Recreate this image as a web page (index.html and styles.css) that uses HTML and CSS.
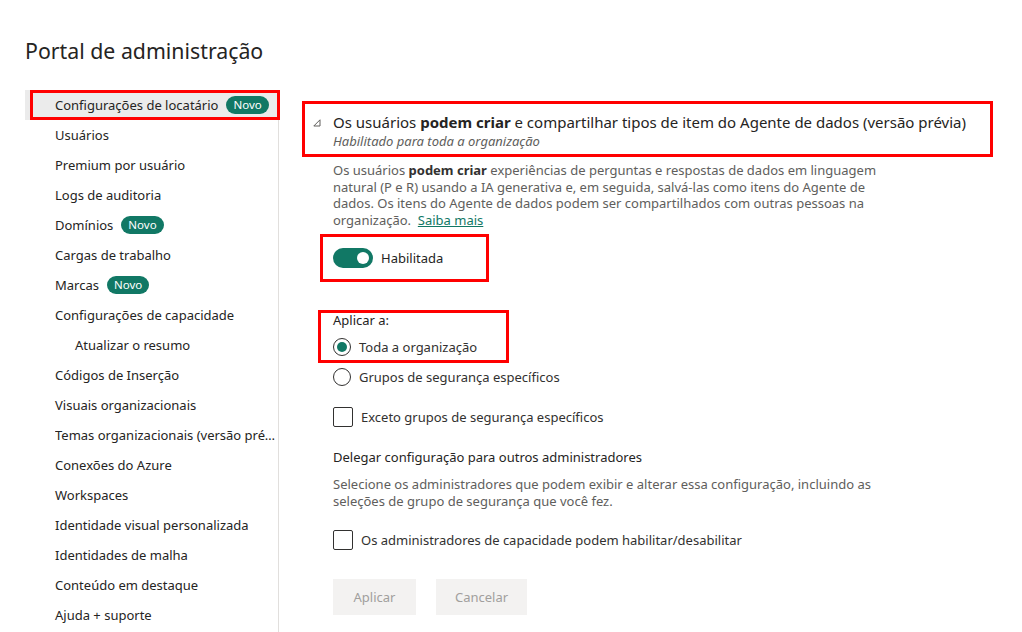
FILE: index.html
```html
<!DOCTYPE html>
<html lang="pt-BR">
<head>
<meta charset="utf-8">
<title>Portal de administração</title>
<link rel="stylesheet" href="styles.css">
</head>
<body>
<h1 class="page-title">Portal de administração</h1>
<div class="layout">
  <nav class="sidebar">
    <div class="nav-item selected">Configurações de locatário <span class="badge">Novo</span></div>
    <div class="nav-item">Usuários</div>
    <div class="nav-item">Premium por usuário</div>
    <div class="nav-item">Logs de auditoria</div>
    <div class="nav-item">Domínios <span class="badge">Novo</span></div>
    <div class="nav-item">Cargas de trabalho</div>
    <div class="nav-item">Marcas <span class="badge">Novo</span></div>
    <div class="nav-item">Configurações de capacidade</div>
    <div class="nav-item sub">Atualizar o resumo</div>
    <div class="nav-item">Códigos de Inserção</div>
    <div class="nav-item">Visuais organizacionais</div>
    <div class="nav-item"><span class="ellip">Temas organizacionais (versão prévia)</span></div>
    <div class="nav-item">Conexões do Azure</div>
    <div class="nav-item">Workspaces</div>
    <div class="nav-item">Identidade visual personalizada</div>
    <div class="nav-item">Identidades de malha</div>
    <div class="nav-item">Conteúdo em destaque</div>
    <div class="nav-item">Ajuda + suporte</div>
  </nav>
  <main class="main">
    <div class="setting-header">
      <svg class="caret" width="8" height="8" viewBox="0 0 8 8"><path d="M7 0.8 L7 7 L0.8 7 Z" fill="none" stroke="#605e5c" stroke-width="1"/></svg>
      <div class="header-text">
        <div class="setting-title">Os usuários <b>podem criar</b> e compartilhar tipos de item do Agente de dados (versão prévia)</div>
        <div class="setting-sub">Habilitado para toda a organização</div>
      </div>
    </div>
    <div class="setting-body">
      <p class="desc">Os usuários <b>podem criar</b> experiências de perguntas e respostas de dados em linguagem<br>natural (P e R) usando a IA generativa e, em seguida, salvá-las como itens do Agente de<br>dados. Os itens do Agente de dados podem ser compartilhados com outras pessoas na<br>organização.&nbsp; <a class="link" href="#">Saiba mais</a></p>

      <div class="toggle-box">
        <span class="toggle"><span class="thumb"></span></span>
        <span class="toggle-label">Habilitada</span>
      </div>

      <div class="apply-box">
        <div class="apply-label">Aplicar a:</div>
        <div class="option first"><span class="radio checked"></span><span>Toda a organização</span></div>
      </div>
      <div class="option second"><span class="radio"></span><span>Grupos de segurança específicos</span></div>

      <div class="option check-row"><span class="checkbox"></span><span>Exceto grupos de segurança específicos</span></div>

      <div class="delegate-title">Delegar configuração para outros administradores</div>
      <p class="desc delegate-desc">Selecione os administradores que podem exibir e alterar essa configuração, incluindo as<br>seleções de grupo de segurança que você fez.</p>

      <div class="option check-row2"><span class="checkbox"></span><span>Os administradores de capacidade podem habilitar/desabilitar</span></div>

      <div class="buttons">
        <button class="btn btn-apply">Aplicar</button>
        <button class="btn btn-cancel">Cancelar</button>
      </div>
    </div>
  </main>
</div>
</body>
</html>
```
FILE: styles.css
```css
* { box-sizing: border-box; }
html, body { margin: 0; padding: 0; background: #ffffff; }
body {
  font-family: "Segoe UI", "Noto Sans", "Open Sans", sans-serif;
  color: #323130;
  width: 1022px;
  height: 632px;
  overflow: hidden;
}
.page-title {
  margin: 0;
  padding: 34px 0 0 25px;
  font-size: 21.3px;
  font-weight: 400;
  line-height: 34px;
  color: #252423;
  height: 90px;
}
.layout {
  display: flex;
  align-items: stretch;
  height: 542px;
}
.sidebar {
  width: 254px;
  margin-left: 25px;
  border-right: 1px solid #e1dfdd;
  flex-shrink: 0;
}
.nav-item {
  position: relative;
  height: 30px;
  display: flex;
  align-items: center;
  padding-left: 30px;
  font-size: 13px;
  color: #252423;
  white-space: nowrap;
}
.nav-item.sub { padding-left: 50px; }
.nav-item.selected { background: #ebebeb; margin-right: 1px; }
.nav-item.selected::after {
  content: "";
  position: absolute;
  left: 5px;
  right: -3px;
  top: 0;
  bottom: 0;
  border: 3px solid #ff0000;
}
.ellip {
  display: block;
  overflow: hidden;
  text-overflow: ellipsis;
  width: 222px;
}
.badge {
  display: inline-flex;
  align-items: center;
  height: 18px;
  padding: 0 7px;
  margin-left: 8px;
  border-radius: 9px;
  background: #117865;
  color: #ffffff;
  font-size: 11.5px;
  font-weight: 400;
  line-height: 18px;
}
.main {
  flex: 1;
  padding-left: 23px;
  padding-top: 11px;
}
.setting-header {
  width: 691px;
  height: 56px;
  border: 3px solid #ff0000;
  display: flex;
  align-items: flex-start;
  padding: 8px 0 0 8px;
}
.caret { margin-top: 7px; flex-shrink: 0; }
.header-text { margin-left: 12px; }
.setting-title {
  font-size: 15px;
  line-height: 21px;
  color: #252423;
  white-space: nowrap;
}
.setting-title b { font-weight: 700; }
.setting-sub {
  font-size: 13px;
  font-style: italic;
  color: #605e5c;
  line-height: 17px;
}
.setting-body {
  padding-left: 31px;
}
.desc {
  margin: 5px 0 0 0;
  font-size: 13px;
  line-height: 16.5px;
  color: #605e5c;
  white-space: nowrap;
}
.desc b { color: #323130; font-weight: 700; }
.link { color: #117865; text-decoration: underline; }
.toggle-box {
  margin: 6px 0 0 -13px;
  width: 169px;
  height: 48px;
  border: 3px solid #ff0000;
  display: flex;
  align-items: center;
  padding-left: 10px;
}
.toggle {
  position: relative;
  width: 40px;
  height: 20px;
  border-radius: 10px;
  background: #117865;
  display: inline-block;
}
.thumb {
  position: absolute;
  right: 4px;
  top: 4px;
  width: 12px;
  height: 12px;
  border-radius: 50%;
  background: #ffffff;
}
.toggle-label {
  margin-left: 8px;
  font-size: 13px;
  color: #252423;
}
.apply-box {
  margin: 28px 0 0 -15px;
  width: 191px;
  height: 53px;
  border: 3px solid #ff0000;
  padding: 0 0 0 12px;
}
.apply-label {
  font-size: 13px;
  line-height: 14px;
  color: #252423;
}
.option {
  display: flex;
  align-items: center;
  font-size: 13px;
  color: #323130;
  height: 30px;
}
.option.first { margin-top: 7px; height: 26px; }
.option.second { margin-top: -1px; }
.radio {
  width: 18px;
  height: 18px;
  border: 1px solid #323130;
  border-radius: 50%;
  margin-right: 8px;
  position: relative;
  flex-shrink: 0;
}
.radio.checked::after {
  content: "";
  position: absolute;
  left: 3px;
  top: 3px;
  width: 10px;
  height: 10px;
  border-radius: 50%;
  background: #117865;
}
.checkbox {
  width: 20px;
  height: 20px;
  border: 1px solid #323130;
  border-radius: 2px;
  margin-right: 8px;
  flex-shrink: 0;
}
.check-row { margin-top: 10px; }
.delegate-title {
  margin-top: 15px;
  font-size: 13px;
  line-height: 20px;
  color: #252423;
}
.delegate-desc { margin-top: 9px; }
.check-row2 { margin-top: 16px; }
.buttons {
  display: flex;
  gap: 20px;
  margin-top: 24px;
}
.btn {
  height: 36px;
  border: none;
  background: #f3f2f1;
  color: #a19f9d;
  font-family: inherit;
  font-size: 13px;
  padding: 0;
}
.btn-apply { width: 83px; }
.btn-cancel { width: 91px; }
```
